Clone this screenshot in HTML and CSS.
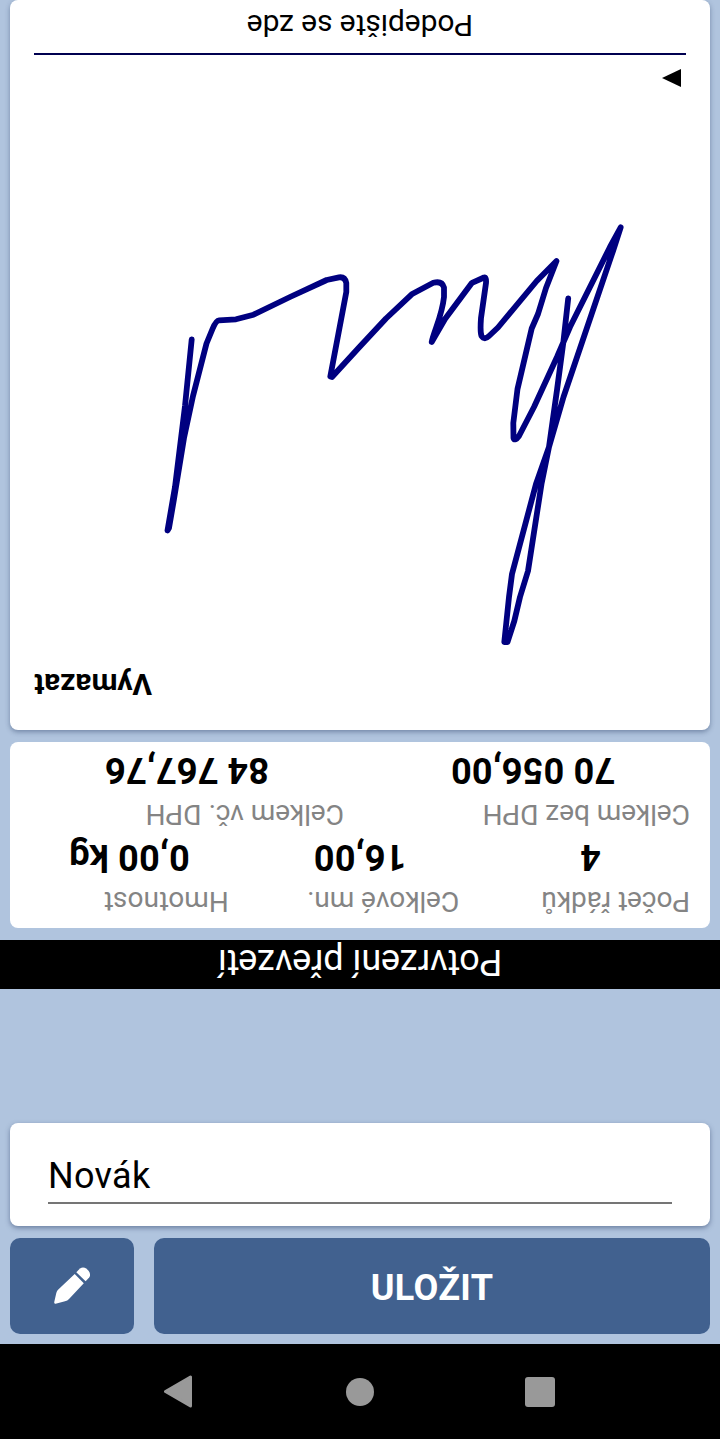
FILE: index.html
```html
<!DOCTYPE html>
<html lang="cs">
<head>
<meta charset="UTF-8">
<meta name="viewport" content="width=device-width, initial-scale=1.0">
<title>Potvrzení převzetí</title>
<link rel="stylesheet" href="styles.css">
</head>
<body>
<!-- customer side, turned towards the person who signs -->
<div class="customer">
  <header class="title"><span>Potvrzení převzetí</span></header>
  <div class="card summary">
    <div class="row">
      <div class="item"><div class="label">Počet řádků</div><div class="value">4</div></div>
      <div class="item"><div class="label">Celkové mn.</div><div class="value">16,00</div></div>
      <div class="item"><div class="label">Hmotnost</div><div class="value">0,00 kg</div></div>
    </div>
    <div class="row">
      <div class="item"><div class="label">Celkem bez DPH</div><div class="value">70 056,00</div></div>
      <div class="item"><div class="label">Celkem vč. DPH</div><div class="value">84 767,76</div></div>
    </div>
  </div>
  <div class="card pad">
    <div class="clear">Vymazat</div>
    <svg class="signature" viewBox="34 200 652 460">
      <path d="M191.7 339.5L185 406L175 487L167.5 530.5L169 528L174 499L184 438L193 396L206.5 343.5L212.5 329Q216 320.5 219 320.3L236 319.3L253.5 314.7L290 297L326.7 280L339 277.3Q345 276.5 346.3 283L346.3 292L330.3 376.5L332 377L359 347.5L386 318.5L411.7 294.3L433.3 282.8Q442 280.5 444 287.5L444 297C442 316 434 331 431.7 342L445 319L472 282.8L484 277.5Q486.5 277 486 283L481 318Q480 332 481.5 336Q484.5 340.5 489 336L498 327.5L536.7 281L556.5 261L546 288L538 314L531.7 328.5L517.5 389L513.3 423L513.5 438Q515 441.5 519 436L534 407L557 357L570 327L610 247L620.7 227.3L613 251L563.5 397L549 447L536 484L512 574L509 597L504.3 642L507.5 642L514.3 621L520 597L528 571L541.5 484L549 447L557 390L563.5 341L568.2 298.5"/>
    </svg>
    <svg class="arrow" viewBox="0 0 19 18"><path d="M0 0L19 9L0 18z"/></svg>
    <div class="line"></div>
    <div class="hint"><span>Podepište se zde</span></div>
  </div>
</div>

<div class="operator">
  <div class="card name">
    <div class="input">Novák</div>
  </div>
  <div class="buttons">
    <button class="btn edit">
      <svg class="pencil" viewBox="0 0 36 37">
        <path d="M20.7 7L29.8 16.2L15 32Q13.5 33.7 11 34.3L1.6 36.7Q0 37 0.2 35.3L2.3 26Q2.8 24 4.3 22.6z"/>
        <path d="M22.3 5.2L26 1.6Q29-.8 32.6 1.8L34.5 3.8Q37.2 7 35.2 10.6L31.6 14.3z"/>
      </svg>
    </button>
    <button class="btn save"><span>ULOŽIT</span></button>
  </div>
</div>

<nav class="navbar">
  <svg class="back" viewBox="0 0 28 33"><path d="M1.5 16.5L26.5 2V31z"/></svg>
  <div class="home"></div>
  <div class="recent"></div>
</nav>
</body>
</html>
```
FILE: styles.css
```css
* {
  box-sizing: border-box;
}
body {
  margin: 0;
  width: 720px;
  height: 1439px;
  overflow: hidden;
  background: #b0c4de;
  color: #000;
  font-family: Roboto, sans-serif;
  display: flex;
  flex-direction: column;
}

.customer {
  height: 989px;
  display: flex;
  flex-direction: column;
  transform: rotate(180deg);
}
.title {
  height: 49px;
  padding-top: 6px;
  background: #000;
  color: #fff;
  font-size: 36px;
  line-height: 42px;
  text-align: center;
}
.card {
  margin: 0 10px;
  background: #fff;
  border-radius: 8px;
}

.summary {
  height: 186px;
  margin-top: 12px;
  padding: 10px 4px 0;
}
.row {
  display: flex;
  height: 87px;
}
.item {
  flex: 1;
  padding: 0 14px;
}
.label {
  margin-left: 2px;
  font-size: 28px;
  line-height: 33px;
  height: 40px;
  color: #848484;
}
.value {
  font-size: 36px;
  font-weight: bold;
  line-height: 42px;
  letter-spacing: 0.2px;
  text-align: center;
}

.pad {
  height: 730px;
  margin-top: 12px;
  padding: 29px 24px 0;
  display: flex;
  flex-direction: column;
  box-shadow: 0 -2px 5px rgba(40, 60, 100, 0.45);
}
.clear {
  height: 41px;
  font-size: 30px;
  font-weight: bold;
  line-height: 33px;
  text-align: right;
}
.signature {
  width: 652px;
  height: 460px;
  transform: rotate(180deg);
  fill: none;
  stroke: #000080;
  stroke-width: 5.8;
  stroke-linecap: round;
  stroke-linejoin: round;
}
.arrow {
  width: 19px;
  height: 18px;
  margin: 113px 0 14px 5px;
}
.line {
  height: 2px;
  background: #000050;
}
.hint {
  margin-top: 11px;
  font-size: 30px;
  line-height: 33px;
  letter-spacing: -0.1px;
  text-align: center;
}

.operator {
  height: 355px;
  padding-top: 134px;
}
.name {
  height: 103px;
  padding: 31px 38px 0;
  box-shadow: 0 2px 5px rgba(40, 60, 100, 0.5);
}
.input {
  height: 50px;
  padding-top: 1px;
  border-bottom: 2px solid #757575;
  font-size: 36px;
  line-height: 42px;
  letter-spacing: 0.3px;
}
.buttons {
  display: flex;
  gap: 20px;
  padding: 12px 10px 0;
}
.btn {
  height: 96px;
  padding: 0;
  border: 0;
  border-radius: 10px;
  background: #41618f;
  color: #fff;
  font-family: inherit;
  font-size: 36px;
  font-weight: bold;
  letter-spacing: 0.3px;
  display: flex;
  align-items: center;
  justify-content: center;
}
.edit {
  width: 124px;
  padding-bottom: 1px;
}
.save {
  flex: 1;
  padding-top: 4px;
}
.pencil {
  width: 36px;
  height: 37px;
  fill: #fff;
}

.navbar {
  height: 95px;
  background: #000;
  display: grid;
  grid-template-columns: repeat(3, 180px);
  justify-content: center;
  align-items: center;
  justify-items: center;
}
.back {
  width: 28px;
  height: 33px;
  margin-right: 4px;
  fill: #999;
  stroke: #999;
  stroke-width: 3;
  stroke-linejoin: round;
}
.home {
  width: 28px;
  height: 28px;
  border-radius: 50%;
  background: #999;
}
.recent {
  width: 30px;
  height: 30px;
  border-radius: 3px;
  background: #999;
}
```
